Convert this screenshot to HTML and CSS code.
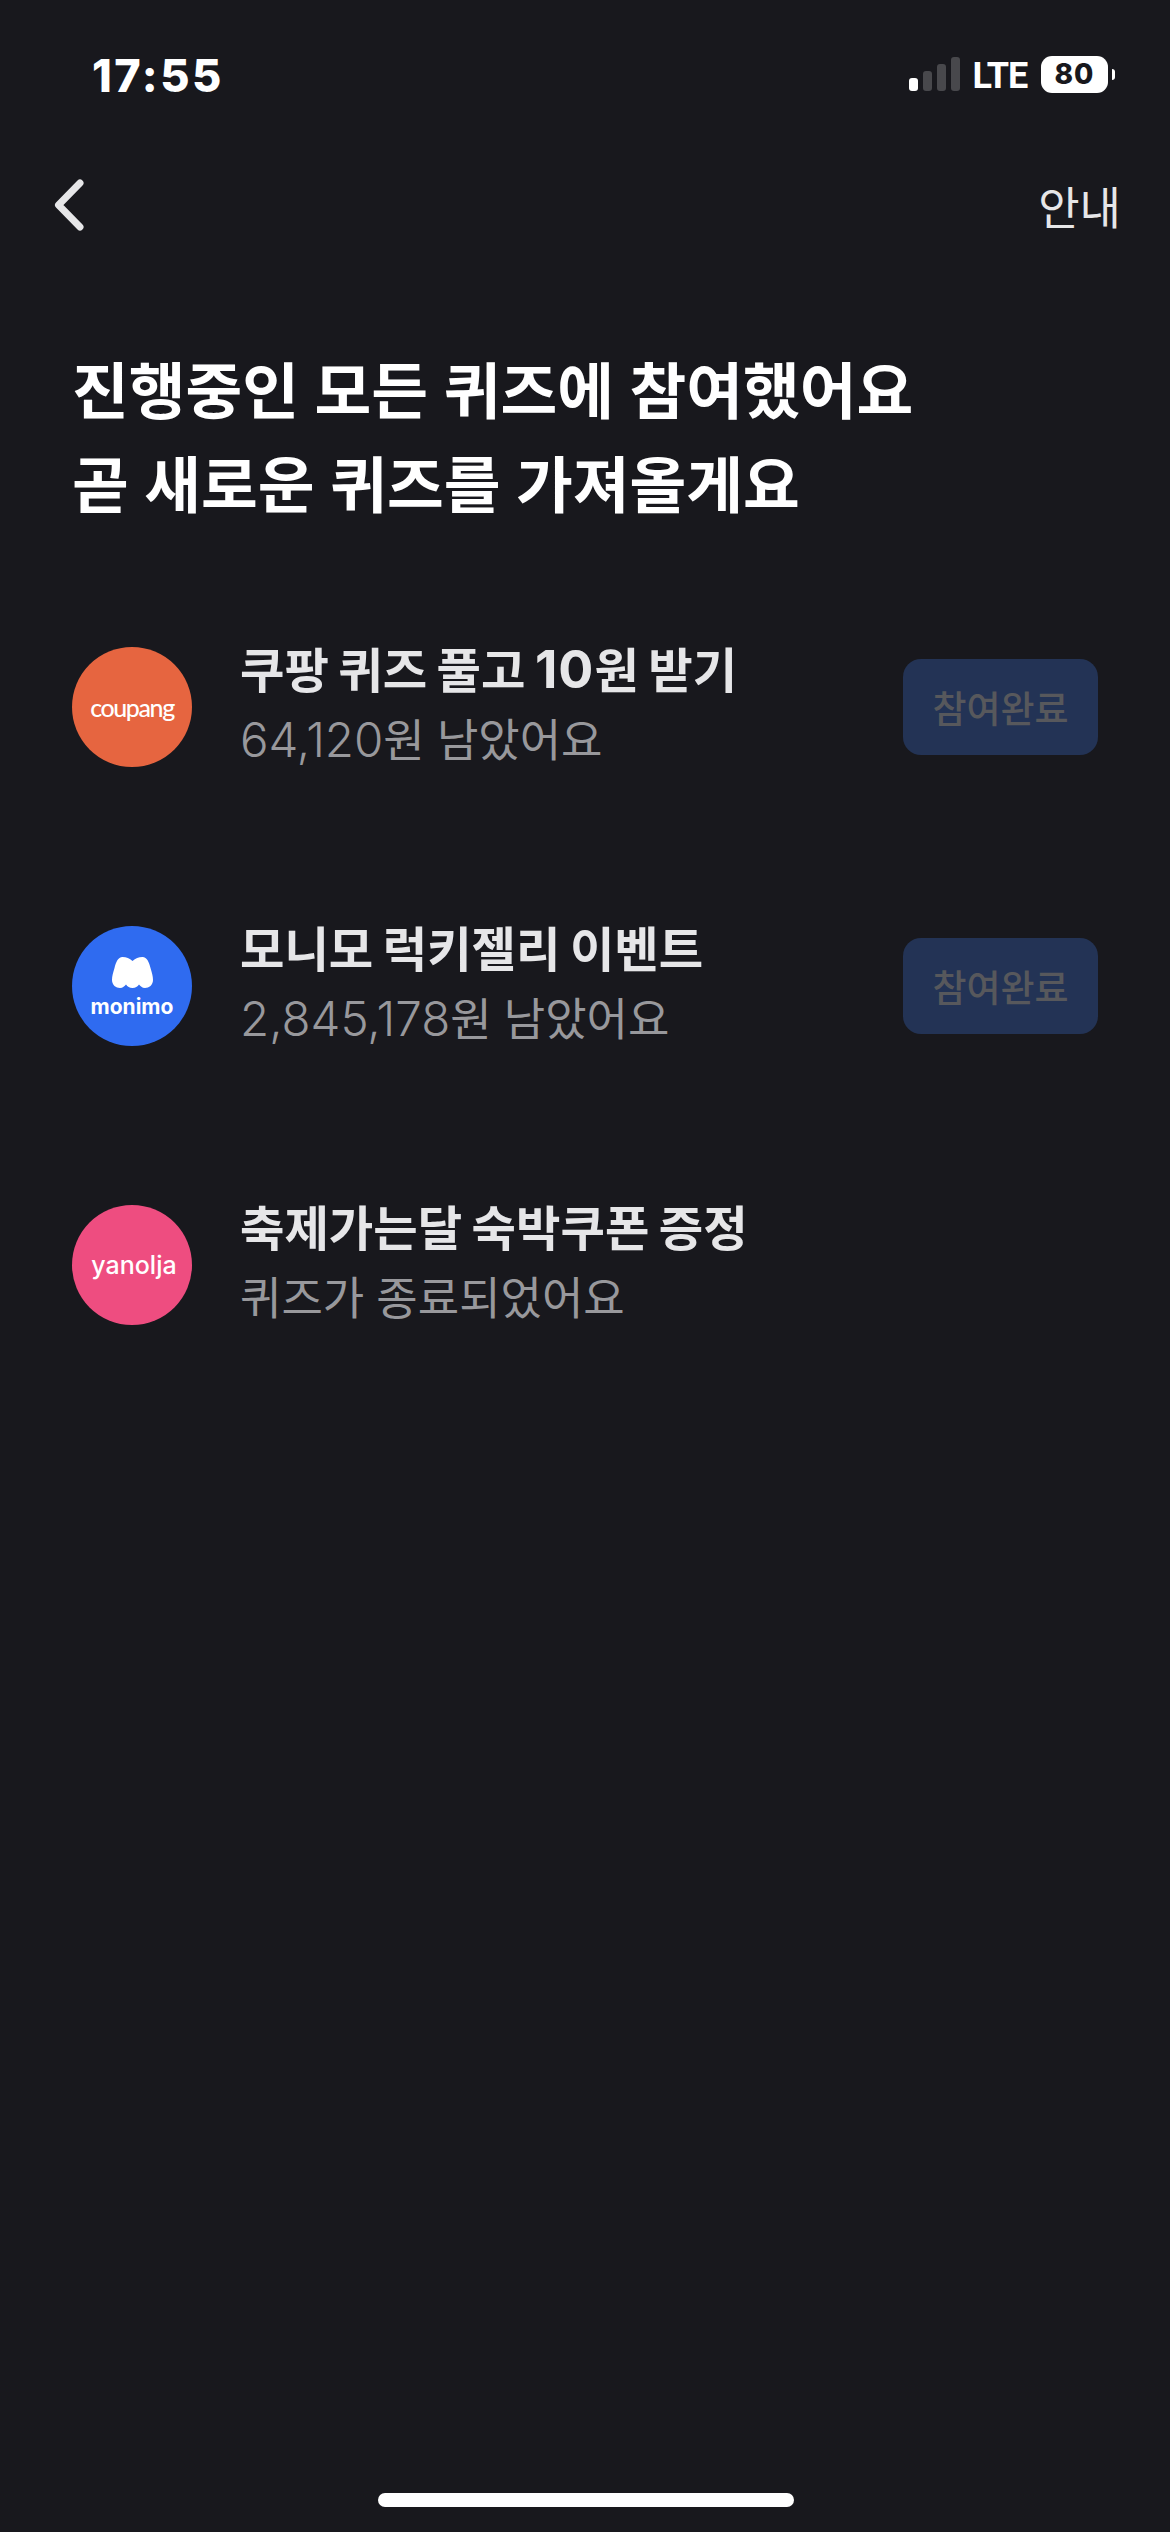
FILE: index.html
```html
<!DOCTYPE html>
<html lang="ko">
<head>
<meta charset="utf-8">
<title>퀴즈</title>
<link rel="stylesheet" href="styles.css">
</head>
<body>
<div class="screen">
  <div class="status">
    <span class="time">17:55</span>
    <div class="status-right">
      <svg class="signal" width="51" height="35" viewBox="0 0 51 35">
        <rect x="0" y="21" width="9" height="13" rx="3" fill="#fff"/>
        <rect x="14" y="14" width="9" height="20" rx="3" fill="#48484c"/>
        <rect x="28" y="7" width="9" height="27" rx="3" fill="#48484c"/>
        <rect x="42" y="0" width="9" height="34" rx="3" fill="#48484c"/>
      </svg>
      <span class="lte">LTE</span>
      <div class="battery"><span class="battery-level">80</span></div>
      <span class="battery-cap"></span>
    </div>
  </div>
  <div class="nav">
    <svg class="back" width="36" height="56" viewBox="0 0 36 56">
      <path d="M30 6 L8.5 28 L30 50" fill="none" stroke="#e6e6e8" stroke-width="7" stroke-linecap="round" stroke-linejoin="round"/>
    </svg>
    <span class="guide">안내</span>
  </div>
  <h1 class="heading">진행중인 모든 퀴즈에 참여했어요<br>곧 새로운 퀴즈를 가져올게요</h1>
  <div class="list">
    <div class="row">
      <div class="logo coupang">coupang</div>
      <div class="info">
        <div class="title">쿠팡 퀴즈 풀고 <span class="title-num">10</span>원 받기</div>
        <div class="sub"><span class="sub-num">64,120</span>원 남았어요</div>
      </div>
      <div class="done">참여완료</div>
    </div>
    <div class="row">
      <div class="logo monimo">
        <svg width="41" height="31" viewBox="0 0 41 31">
          <path d="M10.5 0 C14.5 0 17.5 1.5 20.5 4 C23.5 1.5 26.5 0 30.5 0 C35 0 37 5 38.5 11 C40 16 41 19 41 23 C41 28 37 31 33 31 C30 31 28.5 29 27 27.5 C25.5 29.5 23.5 31 20.5 31 C17.5 31 15.5 29.5 14 27.5 C12.5 29 11 31 8 31 C4 31 0 28 0 23 C0 19 1 16 2.5 11 C4 5 6 0 10.5 0 Z" fill="#fff"/>
        </svg>
        <span class="monimo-word">monimo</span>
      </div>
      <div class="info">
        <div class="title">모니모 럭키젤리 이벤트</div>
        <div class="sub"><span class="sub-num">2,845,178</span>원 남았어요</div>
      </div>
      <div class="done">참여완료</div>
    </div>
    <div class="row">
      <div class="logo yanolja">yanolja</div>
      <div class="info">
        <div class="title">축제가는달 숙박쿠폰 증정</div>
        <div class="sub">퀴즈가 종료되었어요</div>
      </div>
    </div>
  </div>
  <div class="home-bar"></div>
</div>
</body>
</html>
```

FILE: styles.css
```css
* { box-sizing: border-box; }
html, body { margin: 0; padding: 0; background: #18181d; }
body { font-family: "Inter", "Noto Sans CJK KR", sans-serif; color: #fff; }
.screen { position: relative; width: 1170px; height: 2532px; background: #18181d; overflow: hidden; }

.status { height: 150px; padding: 47px 55px 0 92px; display: flex; justify-content: space-between; align-items: flex-start; }
.time { font-weight: 800; font-size: 45px; letter-spacing: 2.5px; line-height: 54px; padding-top: 2px; color: #fff; }
.status-right { display: flex; align-items: center; height: 54px; }
.signal { margin-right: 13px; }
.lte { font-family: "Roboto", sans-serif; font-weight: 700; font-size: 36px; letter-spacing: -1.2px; padding-top: 3px; color: #fff; margin-right: 14px; }
.battery { width: 67px; height: 37px; background: #fff; border-radius: 11px; display: flex; align-items: center; justify-content: center; }
.battery-level { font-weight: 800; font-size: 28px; letter-spacing: 1px; color: #18181d; }
.battery-cap { width: 3px; height: 11px; background: #fff; border-radius: 0 6px 6px 0; margin-left: 4px; }

.nav { height: 110px; padding: 0 49px 0 50px; display: flex; justify-content: space-between; align-items: center; }
.guide { font-size: 45px; font-weight: 400; color: #e6e6e8; line-height: 60px; padding-top: 8px; }

.heading { margin: 85px 0 0 72px; font-size: 61.7px; font-weight: 700; line-height: 94px; word-spacing: 1px; color: #fff; }

.list { margin: 114px 0 0 72px; width: 1026px; display: flex; flex-direction: column; gap: 159px; }
.row { height: 120px; display: flex; align-items: center; }
.logo { flex: none; width: 120px; height: 120px; border-radius: 50%; display: flex; flex-direction: column; align-items: center; justify-content: center; color: #fff; font-family: "Lato", sans-serif; }
.coupang { background: #e66540; font-size: 25px; font-weight: 500; letter-spacing: -1.4px; }
.monimo { background: #2f6bf0; gap: 9px; padding-top: 2px; }
.monimo-word { font-family: "Inter", sans-serif; font-size: 21px; font-weight: 700; line-height: 20px; }
.yanolja { background: #ee4d80; font-size: 25px; font-weight: 500; font-family: "Inter", sans-serif; padding-left: 4px; }

.info { flex: 1; margin: 0 0 2px 48px; }
.title { font-size: 48.3px; font-weight: 700; line-height: 66px; word-spacing: -2px; color: #e6e6e8; }
.title-num { font-size: 52px; letter-spacing: 1px; line-height: 1; }
.sub { font-size: 45px; font-weight: 400; line-height: 66px; margin-top: 4px; word-spacing: -0.5px; color: #98989c; }
.sub-num { font-size: 47.5px; font-weight: 300; line-height: 1; }

.done { flex: none; width: 195px; height: 96px; border-radius: 18px; background: #233355; color: #57585c; font-size: 37px; font-weight: 500; display: flex; align-items: center; justify-content: center; }

.home-bar { position: absolute; left: 378px; top: 2493px; width: 416px; height: 14px; border-radius: 7px; background: #fff; }
```
